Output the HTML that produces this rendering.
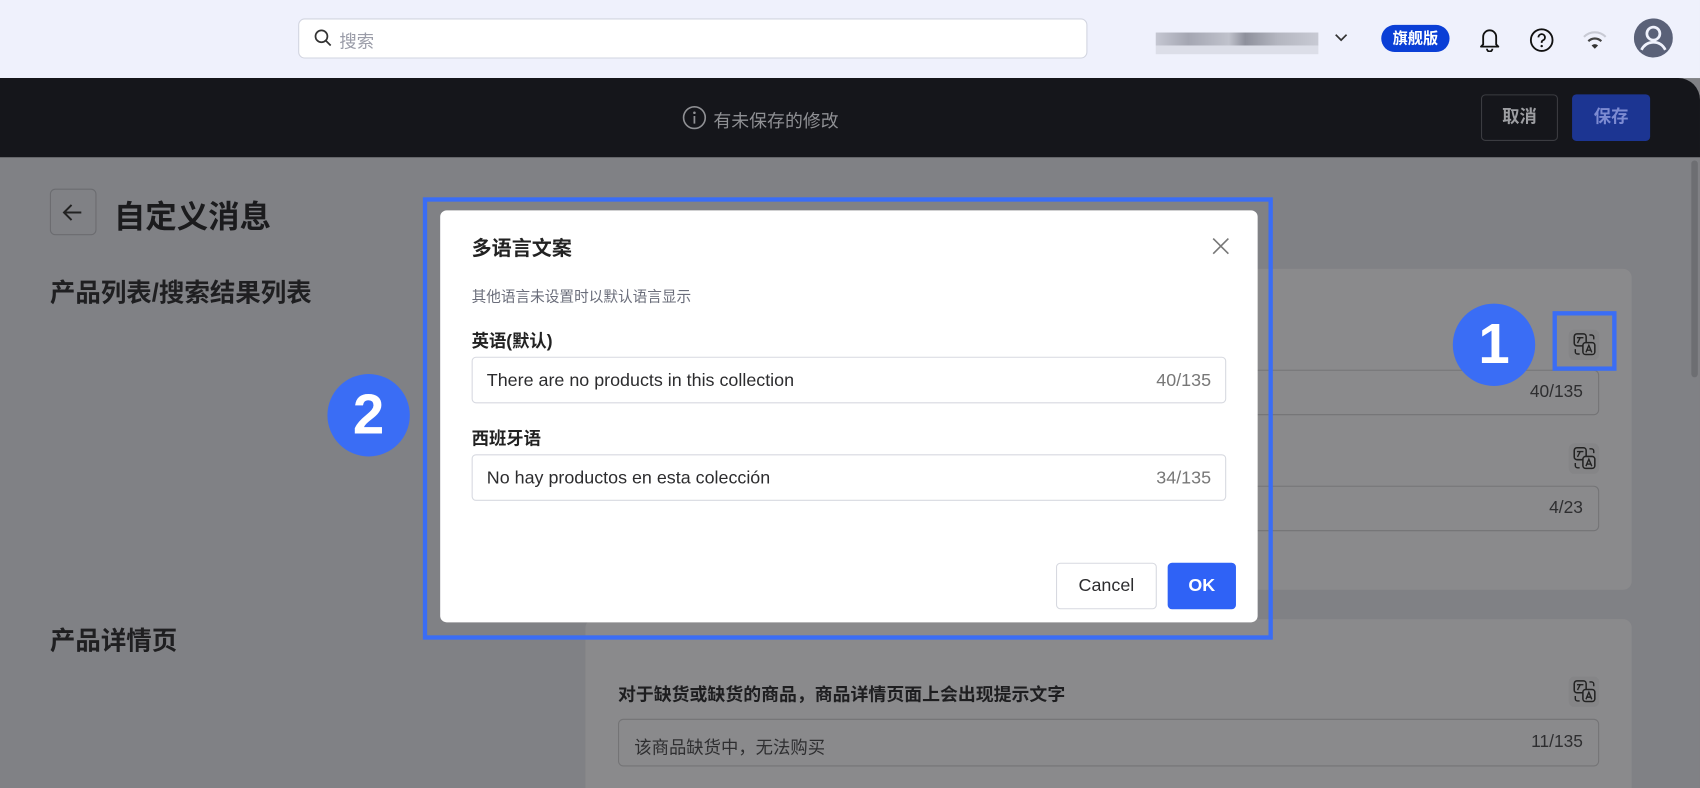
<!DOCTYPE html>
<html><head><meta charset="utf-8"><style>
*{box-sizing:border-box;margin:0;padding:0}
html,body{width:1700px;height:788px;overflow:hidden;background:#808185}
body{font-family:"Liberation Sans","Noto Sans CJK SC",sans-serif}
#w{position:absolute;left:0;top:0;width:1568px;height:727px;transform:scale(1.08418);transform-origin:0 0;background:#808185;overflow:hidden}
.a{position:absolute}
.ti{position:absolute;width:28px;height:28px;border-radius:5px;background:#858587}
.inp{position:absolute;border:1px solid #747476;border-radius:5px;background:#8a8a8c;color:#2e2e30;font-size:16px}
.cnt{position:absolute;right:14px;top:11px;color:#2e2e30}
</style></head><body><div id="w">
<div class="a" style="left:0;top:0;width:1568px;height:72px;background:#eff1fc"></div>
<div class="a" style="left:275px;top:17px;width:728px;height:37px;border:1px solid #d2d5e0;border-radius:6px;background:#fff"></div>
<svg class="a" style="left:289px;top:26px" width="18" height="18" viewBox="0 0 18 18"><circle cx="7.5" cy="7.5" r="5.5" fill="none" stroke="#333" stroke-width="1.6"/><path d="M11.5 11.5L16 16" stroke="#333" stroke-width="1.6"/></svg>
<div class="a" style="left:313px;top:25px;font-size:16px;color:#9a9ca8">搜索</div>
<div class="a" style="left:1066px;top:30px;width:150px;height:12px;background:linear-gradient(90deg,#c5c7d2,#a4a6b2 20%,#c0c2cc 45%,#8e909c 55%,#b4b6c0 75%,#c8cad4)"></div>
<div class="a" style="left:1066px;top:42px;width:150px;height:8px;background:#dcdee8"></div>
<svg class="a" style="left:1230px;top:30px" width="14" height="10"><path d="M2 2l5 5 5-5" fill="none" stroke="#333" stroke-width="1.6"/></svg>
<div class="a" style="left:1274px;top:23px;width:63px;height:25px;border-radius:13px;background:#0b3fd6;color:#fff;font-size:14px;font-weight:bold;text-align:center;line-height:25px">旗舰版</div>
<svg class="a" style="left:1363px;top:24px" width="22" height="24" viewBox="0 0 22 24"><path d="M5 17V10a6 6 0 0 1 12 0v7l2 2H3z" fill="none" stroke="#111" stroke-width="1.7" stroke-linejoin="round"/><path d="M8.5 21a2.5 2.5 0 0 0 5 0" fill="none" stroke="#111" stroke-width="1.7"/></svg>
<svg class="a" style="left:1410px;top:25px" width="24" height="24" viewBox="0 0 24 24"><circle cx="12" cy="12" r="10" fill="none" stroke="#111" stroke-width="1.7"/><path d="M9 9.5a3 3 0 1 1 4 2.8c-.8.4-1 .9-1 1.7v.5" fill="none" stroke="#111" stroke-width="1.7"/><circle cx="12" cy="17.5" r="1.1" fill="#111"/></svg>
<svg class="a" style="left:1459px;top:27px" width="24" height="20" viewBox="0 0 24 20"><path d="M2 7a14 14 0 0 1 20 0" fill="none" stroke="#c8cad4" stroke-width="2"/><path d="M6 11a8.5 8.5 0 0 1 12 0" fill="none" stroke="#444" stroke-width="2"/><path d="M9 15l3 3 3-3a4 4 0 0 0-6 0z" fill="#333"/></svg>
<svg class="a" style="left:1507px;top:17px" width="36" height="36" viewBox="0 0 36 36"><circle cx="18" cy="18" r="18" fill="#5a6178"/><circle cx="18" cy="14" r="6" fill="none" stroke="#eff1fc" stroke-width="2.5"/><path d="M7 29c3-6 8-7 11-7s8 1 11 7" fill="none" stroke="#eff1fc" stroke-width="2.5"/></svg>
<div class="a" style="left:0;top:72px;width:1568px;height:73px;background:#15161b;border-top-right-radius:20px"></div>
<svg class="a" style="left:629px;top:97px" width="23" height="23" viewBox="0 0 23 23"><circle cx="11.5" cy="11.5" r="10" fill="none" stroke="#8f9094" stroke-width="1.5"/><circle cx="11.5" cy="7" r="1.2" fill="#8f9094"/><path d="M11.5 10v7" stroke="#8f9094" stroke-width="1.6"/></svg>
<div class="a" style="left:658px;top:98px;font-size:16.5px;color:#8f9094">有未保存的修改</div>
<div class="a" style="left:1366px;top:87px;width:71px;height:43px;border:1px solid #3b3c41;border-radius:4px;color:#9d9ea2;font-size:16px;font-weight:bold;text-align:center;line-height:41px">取消</div>
<div class="a" style="left:1450px;top:87px;width:72px;height:43px;background:#1c3592;border-radius:4px;color:#7d8bd2;font-size:16px;font-weight:bold;text-align:center;line-height:43px">保存</div>
<div class="a" style="left:1560px;top:148px;width:6px;height:200px;border-radius:3px;background:#6d6e72"></div>
<div class="a" style="left:46px;top:174px;width:43px;height:43px;border:1px solid #6b6c70;border-radius:5px"></div>
<svg class="a" style="left:56px;top:185px" width="22" height="22" viewBox="0 0 22 22"><path d="M19 11H3M10 4l-7 7 7 7" fill="none" stroke="#222" stroke-width="1.8"/></svg>
<div class="a" style="left:105px;top:177px;font-size:29px;font-weight:bold;color:#1b1b1d">自定义消息</div>
<div class="a" style="left:46px;top:251px;font-size:23.5px;font-weight:bold;color:#1f1f21">产品列表/搜索结果列表</div>
<div class="a" style="left:46px;top:572px;font-size:23.5px;font-weight:bold;color:#1f1f21">产品详情页</div>
<div class="a" style="left:540px;top:248px;width:965px;height:296px;background:#8a8a8c;border-radius:8px"></div>
<div class="a" style="left:540px;top:571px;width:965px;height:156px;background:#8a8a8c;border-top-left-radius:8px;border-top-right-radius:8px"></div>
<div class="ti" style="left:1447px;top:304px"></div>
<div class="inp" style="left:570px;top:341px;width:905px;height:42px"><span class="cnt">40/135</span></div>
<div class="ti" style="left:1447px;top:409px"></div>
<div class="inp" style="left:570px;top:448px;width:905px;height:42px"><span class="cnt">4/23</span></div>
<div class="a" style="left:570px;top:627px;font-size:16.5px;font-weight:bold;color:#1e1e20">对于缺货或缺货的商品，商品详情页面上会出现提示文字</div>
<div class="ti" style="left:1447px;top:624px"></div>
<div class="inp" style="left:570px;top:663px;width:905px;height:44px"><span class="a" style="left:14px;top:12px">该商品缺货中，无法购买</span><span class="cnt" style="top:12px">11/135</span></div>
<svg width="0" height="0" style="position:absolute"><defs><g id="tr"><rect x="1" y="1" width="11" height="11" rx="2.5" fill="none" stroke="#222" stroke-width="1.4"/><path d="M3.5 4.5h6M6.5 4.5l-2.5 5" stroke="#222" stroke-width="1.3" fill="none"/><rect x="9" y="9" width="11" height="11" rx="2.5" fill="#8a8a8c" stroke="#222" stroke-width="1.4"/><path d="M11.8 18l2.7-6.5 2.7 6.5M12.7 16h3.6" stroke="#222" stroke-width="1.3" fill="none"/><path d="M2 15v2.5a2 2 0 0 0 2 2h2M15 2h2a2 2 0 0 1 2 2v2" stroke="#222" stroke-width="1.3" fill="none"/></g></defs></svg>
<svg class="a" style="left:1451px;top:307px" width="22" height="22"><use href="#tr"/></svg>
<svg class="a" style="left:1451px;top:412px" width="22" height="22"><use href="#tr"/></svg>
<svg class="a" style="left:1451px;top:627px" width="22" height="22"><use href="#tr"/></svg>
<div class="a" style="left:1432px;top:287px;width:59px;height:55px;border:4px solid #3a6df5"></div>
<div class="a" style="left:1340px;top:280px;width:76px;height:76px;border-radius:50%;background:#3a6df5;color:#fff;font-size:52px;font-weight:bold;text-align:center;line-height:76px">1</div>
<div class="a" style="left:302px;top:345px;width:76px;height:76px;border-radius:50%;background:#3a6df5;color:#fff;font-size:52px;font-weight:bold;text-align:center;line-height:76px">2</div>
<div class="a" style="left:390px;top:182px;width:784px;height:408px;border:4px solid #3a6df5"></div>
<div class="a" style="left:406px;top:194px;width:754px;height:380px;background:#fff;border-radius:6px"></div>
<div class="a" style="left:435px;top:215px;font-size:18.5px;font-weight:bold;color:#222">多语言文案</div>
<svg class="a" style="left:1117px;top:218px" width="18" height="18"><path d="M2 2l14 14M16 2L2 16" stroke="#777" stroke-width="1.5"/></svg>
<div class="a" style="left:435px;top:262px;font-size:13.5px;color:#6a6d7a">其他语言未设置时以默认语言显示</div>
<div class="a" style="left:435px;top:301px;font-size:16px;font-weight:bold;color:#222">英语(默认)</div>
<div class="a" style="left:435px;top:329px;width:696px;height:43px;border:1px solid #d7d9e0;border-radius:4px;font-size:16.5px;color:#2c2c2e"><span class="a" style="left:13px;top:12px">There are no products in this collection</span><span class="a" style="right:13px;top:12px;color:#777">40/135</span></div>
<div class="a" style="left:435px;top:391px;font-size:16px;font-weight:bold;color:#222">西班牙语</div>
<div class="a" style="left:435px;top:419px;width:696px;height:43px;border:1px solid #d7d9e0;border-radius:4px;font-size:16.5px;color:#2c2c2e"><span class="a" style="left:13px;top:12px">No hay productos en esta colección</span><span class="a" style="right:13px;top:12px;color:#777">34/135</span></div>
<div class="a" style="left:974px;top:519px;width:93px;height:43px;border:1px solid #d7d9e0;border-radius:4px;font-size:16.5px;color:#2c2c2e;text-align:center;line-height:41px">Cancel</div>
<div class="a" style="left:1077px;top:519px;width:63px;height:43px;background:#2f62f6;border-radius:4px;font-size:16.5px;font-weight:bold;color:#fff;text-align:center;line-height:43px">OK</div>
</div></body></html>
